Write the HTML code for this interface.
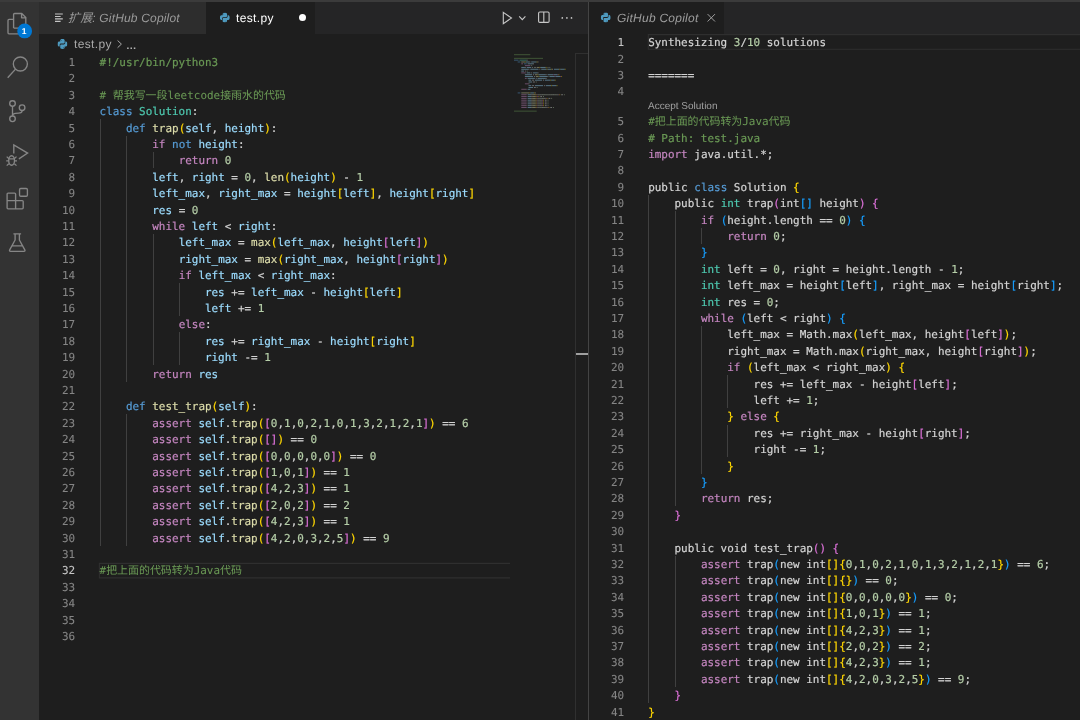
<!DOCTYPE html>
<html lang="zh-CN">
<head>
<meta charset="utf-8">
<title>test.py — GitHub Copilot</title>
<style>
*{box-sizing:border-box}
html,body{margin:0;padding:0}
body{width:1080px;height:720px;overflow:hidden;background:#1e1e1e;position:relative;
 font-family:"Liberation Sans","Noto Sans CJK SC",sans-serif;color:#d4d4d4;text-rendering:geometricPrecision;-webkit-font-smoothing:antialiased}
.abs{position:absolute}
#top{position:absolute;left:0;top:0;width:1080px;height:2px;background:#3b3b3b}
#act{position:absolute;left:0;top:2px;width:39px;height:718px;background:#333333}
#tabsL{position:absolute;left:39px;top:2px;width:549.5px;height:31.8px;background:#252526}
#tabsR{position:absolute;left:589.5px;top:2px;width:490.5px;height:31.8px;background:#252526}
.tab{position:absolute;top:0;height:31.8px}
#sep{position:absolute;left:588.4px;top:2px;width:1.1px;height:718px;background:#444444}
.ui{font-size:12px;white-space:pre;position:absolute;line-height:16px;will-change:transform}
.l,.n{position:absolute;height:16.4px;line-height:16.4px;white-space:pre;
 font-family:"DejaVu Sans Mono","Liberation Mono","Noto Sans CJK SC",monospace;font-size:10.94px}
.l{-webkit-text-stroke:.2px}
.l.k{-webkit-text-stroke:.04px}
.n{-webkit-text-stroke:.08px}
.n{width:40px;text-align:right;color:#858585}
.n.a{color:#c6c6c6}
.ly{position:absolute;left:0;top:0;width:1080px;height:720px;will-change:transform}
.g{position:absolute;width:1px;background:#404040}
.hl{position:absolute;height:16.4px;border:1px solid #2b2b2b;border-right:0}
</style>
</head>
<body>
<div id="top"></div>
<div id="act"></div>
<div id="tabsL">
  <div class="tab" style="left:0;width:167px;background:#2d2d2d"></div>
  <div class="tab" style="left:167px;width:109px;background:#1e1e1e"></div>
</div>
<div id="tabsR">
  <div class="tab" style="left:0;width:134.5px;background:#1e1e1e"></div>
</div>
<div id="sep"></div>


<!-- activity bar + toolbar icons -->
<svg class="abs" style="left:0;top:0" width="1080" height="720" viewBox="0 0 1080 720" fill="none">
<defs>
<symbol id="py" viewBox="0 0 10 10">
<path id="pyh" fill="#4e9abf" d="M5 0C3.2 0 2.75.7 2.75 1.7V2.6H1.5C.5 2.6 0 3.5 0 5C0 6.5.5 7.4 1.5 7.4H2.2V6C2.2 5.1 2.9 4.6 3.7 4.6H6.1C6.8 4.6 7.25 4.1 7.25 3.4V1.7C7.25.7 6.8 0 5 0Z"/>
<use href="#pyh" transform="rotate(180 5 5)"/>
<circle cx="3.9" cy="1.4" r=".45" fill="#1e1e1e" opacity=".55"/><circle cx="6.1" cy="8.6" r=".45" fill="#1e1e1e" opacity=".55"/>
</symbol>
</defs>
<g stroke="#868686" stroke-width="1.35" stroke-linejoin="round" stroke-linecap="butt">
<!-- files -->
<path d="M13.6 28.1V14.5q0-1 1-1H21.8L25.8 17.5V27.1q0 1-1 1H13.6M21.6 13.6V17.8H25.7"/>
<path d="M13.5 19.4H9q-1 0-1 1V32.8q0 1 1 1H18q1 0 1-1V28.4"/>
<!-- search -->
<circle cx="20.35" cy="64" r="7.02"/>
<path d="M15.5 69.1L7.7 77.8"/>
<!-- source control -->
<circle cx="12.5" cy="103.5" r="2.8"/><circle cx="22.1" cy="107.7" r="2.8"/><circle cx="12.5" cy="118.8" r="2.8"/>
<path d="M12.5 106.3V116M22.1 110.5C22.1 112.8 20.5 113.1 18.5 113.2L15.5 113.3C13.5 113.4 12.7 114.4 12.5 116"/>
<!-- debug -->
<path d="M13.8 153.6V144.9L27.6 153.1L18.9 158.9" stroke-linejoin="miter"/>
<ellipse cx="11.6" cy="160.5" rx="2.9" ry="4.75"/>
<path d="M8.7 158.9H14.5M8.7 158.5L6.7 156.6M8.6 160.9H6.2M8.8 163.7L6.7 165.6M14.5 158.5L16.5 156.6M14.6 160.9H17M14.4 163.7L16.5 165.6" stroke-width="1.25"/>
<!-- extensions -->
<rect x="19.55" y="188.45" width="7.85" height="7.8" rx="1.2"/>
<path d="M8.1 193.1H14.6q1 0 1 1V200.6H22.2q1 0 1 1V207.8q0 1-1 1H8.1q-1 0-1-1V194.1q0-1 1-1ZM15.6 200.6V208.8M7.1 200.6H15.6"/>
<!-- beaker -->
<path d="M13.4 233.9H21.1M15.1 234V240L9.7 249.8Q9 251.3 10.6 251.3H23.9Q25.5 251.3 24.8 249.8L19.4 240V234M12.4 245.9H22.1"/>
</g>
<!-- badge -->
<circle cx="24.65" cy="30.95" r="7.4" fill="#0078d4"/>
<!-- preview tab icon -->
<path d="M55 14H62.8M55 16.45H60.6M55 18.9H62.8M55 21.35H60.6" stroke="#c5c5c5" stroke-width="1.1"/>
<!-- python icons -->
<use href="#py" x="219.9" y="12.6" width="9.9" height="10"/>
<use href="#py" x="57.5" y="39" width="9.9" height="10"/>
<use href="#py" x="600.8" y="12.5" width="9.9" height="10"/>
<!-- breadcrumb chevron -->
<path d="M117.6 40.5L121.4 44.1L117.6 47.7" stroke="#a9a9a9" stroke-width="1"/>
<!-- editor actions -->
<g stroke="#c8c8c8" stroke-width="1.1">
<path d="M503.3 12.4L511.5 18L503.3 23.6Z" stroke-linejoin="miter"/>
<path d="M519.2 16.3L522.3 19.6L525.4 16.3"/>
<rect x="538.6" y="12" width="10.5" height="10.4" rx="1.2"/>
<path d="M543.8 12V22.4"/>
</g>
<g fill="#c8c8c8"><circle cx="562.3" cy="17.9" r=".85"/><circle cx="566.9" cy="17.9" r=".85"/><circle cx="571.5" cy="17.9" r=".85"/></g>
<!-- right tab close -->
<path d="M707.6 14.1L715 21.5M715 14.1L707.6 21.5" stroke="#a0a0a0" stroke-width="1"/>
</svg>
<!-- overview ruler -->
<div class="abs" style="left:575.2px;top:53.4px;width:13.2px;height:667px;border-left:1px solid #303030;border-top:1px solid #303030"></div>
<div class="abs" style="left:576px;top:353.4px;width:12.4px;height:2px;background:#a0a0a0"></div>

<div class="ui" style="left:19.3px;top:22.9px;width:10px;text-align:center;font-size:8.5px;font-weight:700;color:#fff">1</div>
<!-- left tab labels -->
<div class="ui" style="left:68px;top:10px;color:#9a9a9a;font-style:italic;letter-spacing:.17px">扩展: GitHub Copilot</div>
<div class="ui" style="left:236px;top:10px;color:#ffffff;letter-spacing:.36px">test.py</div>
<div class="abs" style="left:298.5px;top:13.8px;width:7px;height:7px;border-radius:50%;background:#fff"></div>
<!-- breadcrumb -->
<div class="ui" style="left:74px;top:36px;color:#a9a9a9;letter-spacing:.36px">test.py</div>
<div class="ui" style="left:125.8px;top:37.7px;color:#b4b4b4;font-size:10.5px;font-weight:700;letter-spacing:-.2px">…</div>
<!-- right tab label -->
<div class="ui" style="left:616.7px;top:10px;color:#9d9d9d;font-style:italic;letter-spacing:.25px">GitHub Copilot</div>

<!-- current line highlights -->
<svg class="abs" style="left:0;top:0" width="1080" height="720" viewBox="0 0 1080 720" fill="none" stroke="#2f2f2f" stroke-width="1.15">
<path d="M510 563.3H99.4V577.8H510"/>
<path d="M1080 34.6H648.3V49.2H1080"/>
</svg>

<!-- codelens -->
<div class="ui" style="left:648px;top:99px;font-size:10px;color:#a0a0a0">Accept Solution</div>

<div id="left" class="ly"><div class="g" style="left:100px;top:119.2px;height:426.4px"></div>
<div class="g" style="left:126.34px;top:135.6px;height:246px"></div>
<div class="g" style="left:126.34px;top:414.4px;height:131.2px"></div>
<div class="g" style="left:152.69px;top:152px;height:16.4px"></div>
<div class="g" style="left:152.69px;top:234px;height:131.2px"></div>
<div class="g" style="left:179.03px;top:283.2px;height:32.8px"></div>
<div class="g" style="left:179.03px;top:332.4px;height:32.8px"></div>
<div class="n" style="left:35.2px;top:54.9px">1</div>
<div class="l" style="left:99.6px;top:54.9px"><span style="color:#6A9955">#!/usr/bin/python3</span></div>
<div class="n" style="left:35.2px;top:71.3px">2</div>
<div class="n" style="left:35.2px;top:87.7px">3</div>
<div class="l k" style="left:99.6px;top:87.7px"><span style="color:#6A9955"># 帮我写一段leetcode接雨水的代码</span></div>
<div class="n" style="left:35.2px;top:104.1px">4</div>
<div class="l" style="left:99.6px;top:104.1px"><span style="color:#569CD6">class </span><span style="color:#4EC9B0">Solution</span><span style="color:#D4D4D4">:</span></div>
<div class="n" style="left:35.2px;top:120.5px">5</div>
<div class="l" style="left:99.6px;top:120.5px"><span style="color:#D4D4D4">    </span><span style="color:#569CD6">def </span><span style="color:#DCDCAA">trap</span><span style="color:#FFD700">(</span><span style="color:#9CDCFE">self</span><span style="color:#D4D4D4">, </span><span style="color:#9CDCFE">height</span><span style="color:#FFD700">)</span><span style="color:#D4D4D4">:</span></div>
<div class="n" style="left:35.2px;top:136.9px">6</div>
<div class="l" style="left:99.6px;top:136.9px"><span style="color:#D4D4D4">        </span><span style="color:#C586C0">if </span><span style="color:#569CD6">not </span><span style="color:#9CDCFE">height</span><span style="color:#D4D4D4">:</span></div>
<div class="n" style="left:35.2px;top:153.3px">7</div>
<div class="l" style="left:99.6px;top:153.3px"><span style="color:#D4D4D4">            </span><span style="color:#C586C0">return </span><span style="color:#B5CEA8">0</span></div>
<div class="n" style="left:35.2px;top:169.7px">8</div>
<div class="l" style="left:99.6px;top:169.7px"><span style="color:#D4D4D4">        </span><span style="color:#9CDCFE">left</span><span style="color:#D4D4D4">, </span><span style="color:#9CDCFE">right </span><span style="color:#D4D4D4">= </span><span style="color:#B5CEA8">0</span><span style="color:#D4D4D4">, </span><span style="color:#DCDCAA">len</span><span style="color:#FFD700">(</span><span style="color:#9CDCFE">height</span><span style="color:#FFD700">) </span><span style="color:#D4D4D4">- </span><span style="color:#B5CEA8">1</span></div>
<div class="n" style="left:35.2px;top:186.1px">9</div>
<div class="l" style="left:99.6px;top:186.1px"><span style="color:#D4D4D4">        </span><span style="color:#9CDCFE">left_max</span><span style="color:#D4D4D4">, </span><span style="color:#9CDCFE">right_max </span><span style="color:#D4D4D4">= </span><span style="color:#9CDCFE">height</span><span style="color:#FFD700">[</span><span style="color:#9CDCFE">left</span><span style="color:#FFD700">]</span><span style="color:#D4D4D4">, </span><span style="color:#9CDCFE">height</span><span style="color:#FFD700">[</span><span style="color:#9CDCFE">right</span><span style="color:#FFD700">]</span></div>
<div class="n" style="left:35.2px;top:202.5px">10</div>
<div class="l" style="left:99.6px;top:202.5px"><span style="color:#D4D4D4">        </span><span style="color:#9CDCFE">res </span><span style="color:#D4D4D4">= </span><span style="color:#B5CEA8">0</span></div>
<div class="n" style="left:35.2px;top:218.9px">11</div>
<div class="l" style="left:99.6px;top:218.9px"><span style="color:#D4D4D4">        </span><span style="color:#C586C0">while </span><span style="color:#9CDCFE">left </span><span style="color:#D4D4D4">&lt; </span><span style="color:#9CDCFE">right</span><span style="color:#D4D4D4">:</span></div>
<div class="n" style="left:35.2px;top:235.3px">12</div>
<div class="l" style="left:99.6px;top:235.3px"><span style="color:#D4D4D4">            </span><span style="color:#9CDCFE">left_max </span><span style="color:#D4D4D4">= </span><span style="color:#DCDCAA">max</span><span style="color:#FFD700">(</span><span style="color:#9CDCFE">left_max</span><span style="color:#D4D4D4">, </span><span style="color:#9CDCFE">height</span><span style="color:#DA70D6">[</span><span style="color:#9CDCFE">left</span><span style="color:#DA70D6">]</span><span style="color:#FFD700">)</span></div>
<div class="n" style="left:35.2px;top:251.7px">13</div>
<div class="l" style="left:99.6px;top:251.7px"><span style="color:#D4D4D4">            </span><span style="color:#9CDCFE">right_max </span><span style="color:#D4D4D4">= </span><span style="color:#DCDCAA">max</span><span style="color:#FFD700">(</span><span style="color:#9CDCFE">right_max</span><span style="color:#D4D4D4">, </span><span style="color:#9CDCFE">height</span><span style="color:#DA70D6">[</span><span style="color:#9CDCFE">right</span><span style="color:#DA70D6">]</span><span style="color:#FFD700">)</span></div>
<div class="n" style="left:35.2px;top:268.1px">14</div>
<div class="l" style="left:99.6px;top:268.1px"><span style="color:#D4D4D4">            </span><span style="color:#C586C0">if </span><span style="color:#9CDCFE">left_max </span><span style="color:#D4D4D4">&lt; </span><span style="color:#9CDCFE">right_max</span><span style="color:#D4D4D4">:</span></div>
<div class="n" style="left:35.2px;top:284.5px">15</div>
<div class="l" style="left:99.6px;top:284.5px"><span style="color:#D4D4D4">                </span><span style="color:#9CDCFE">res </span><span style="color:#D4D4D4">+= </span><span style="color:#9CDCFE">left_max </span><span style="color:#D4D4D4">- </span><span style="color:#9CDCFE">height</span><span style="color:#FFD700">[</span><span style="color:#9CDCFE">left</span><span style="color:#FFD700">]</span></div>
<div class="n" style="left:35.2px;top:300.9px">16</div>
<div class="l" style="left:99.6px;top:300.9px"><span style="color:#D4D4D4">                </span><span style="color:#9CDCFE">left </span><span style="color:#D4D4D4">+= </span><span style="color:#B5CEA8">1</span></div>
<div class="n" style="left:35.2px;top:317.3px">17</div>
<div class="l" style="left:99.6px;top:317.3px"><span style="color:#D4D4D4">            </span><span style="color:#C586C0">else</span><span style="color:#D4D4D4">:</span></div>
<div class="n" style="left:35.2px;top:333.7px">18</div>
<div class="l" style="left:99.6px;top:333.7px"><span style="color:#D4D4D4">                </span><span style="color:#9CDCFE">res </span><span style="color:#D4D4D4">+= </span><span style="color:#9CDCFE">right_max </span><span style="color:#D4D4D4">- </span><span style="color:#9CDCFE">height</span><span style="color:#FFD700">[</span><span style="color:#9CDCFE">right</span><span style="color:#FFD700">]</span></div>
<div class="n" style="left:35.2px;top:350.1px">19</div>
<div class="l" style="left:99.6px;top:350.1px"><span style="color:#D4D4D4">                </span><span style="color:#9CDCFE">right </span><span style="color:#D4D4D4">-= </span><span style="color:#B5CEA8">1</span></div>
<div class="n" style="left:35.2px;top:366.5px">20</div>
<div class="l" style="left:99.6px;top:366.5px"><span style="color:#D4D4D4">        </span><span style="color:#C586C0">return </span><span style="color:#9CDCFE">res</span></div>
<div class="n" style="left:35.2px;top:382.9px">21</div>
<div class="n" style="left:35.2px;top:399.3px">22</div>
<div class="l" style="left:99.6px;top:399.3px"><span style="color:#D4D4D4">    </span><span style="color:#569CD6">def </span><span style="color:#DCDCAA">test_trap</span><span style="color:#FFD700">(</span><span style="color:#9CDCFE">self</span><span style="color:#FFD700">)</span><span style="color:#D4D4D4">:</span></div>
<div class="n" style="left:35.2px;top:415.7px">23</div>
<div class="l" style="left:99.6px;top:415.7px"><span style="color:#D4D4D4">        </span><span style="color:#C586C0">assert </span><span style="color:#9CDCFE">self</span><span style="color:#D4D4D4">.</span><span style="color:#DCDCAA">trap</span><span style="color:#FFD700">(</span><span style="color:#DA70D6">[</span><span style="color:#B5CEA8">0</span><span style="color:#D4D4D4">,</span><span style="color:#B5CEA8">1</span><span style="color:#D4D4D4">,</span><span style="color:#B5CEA8">0</span><span style="color:#D4D4D4">,</span><span style="color:#B5CEA8">2</span><span style="color:#D4D4D4">,</span><span style="color:#B5CEA8">1</span><span style="color:#D4D4D4">,</span><span style="color:#B5CEA8">0</span><span style="color:#D4D4D4">,</span><span style="color:#B5CEA8">1</span><span style="color:#D4D4D4">,</span><span style="color:#B5CEA8">3</span><span style="color:#D4D4D4">,</span><span style="color:#B5CEA8">2</span><span style="color:#D4D4D4">,</span><span style="color:#B5CEA8">1</span><span style="color:#D4D4D4">,</span><span style="color:#B5CEA8">2</span><span style="color:#D4D4D4">,</span><span style="color:#B5CEA8">1</span><span style="color:#DA70D6">]</span><span style="color:#FFD700">) </span><span style="color:#D4D4D4">== </span><span style="color:#B5CEA8">6</span></div>
<div class="n" style="left:35.2px;top:432.1px">24</div>
<div class="l" style="left:99.6px;top:432.1px"><span style="color:#D4D4D4">        </span><span style="color:#C586C0">assert </span><span style="color:#9CDCFE">self</span><span style="color:#D4D4D4">.</span><span style="color:#DCDCAA">trap</span><span style="color:#FFD700">(</span><span style="color:#DA70D6">[]</span><span style="color:#FFD700">) </span><span style="color:#D4D4D4">== </span><span style="color:#B5CEA8">0</span></div>
<div class="n" style="left:35.2px;top:448.5px">25</div>
<div class="l" style="left:99.6px;top:448.5px"><span style="color:#D4D4D4">        </span><span style="color:#C586C0">assert </span><span style="color:#9CDCFE">self</span><span style="color:#D4D4D4">.</span><span style="color:#DCDCAA">trap</span><span style="color:#FFD700">(</span><span style="color:#DA70D6">[</span><span style="color:#B5CEA8">0</span><span style="color:#D4D4D4">,</span><span style="color:#B5CEA8">0</span><span style="color:#D4D4D4">,</span><span style="color:#B5CEA8">0</span><span style="color:#D4D4D4">,</span><span style="color:#B5CEA8">0</span><span style="color:#D4D4D4">,</span><span style="color:#B5CEA8">0</span><span style="color:#DA70D6">]</span><span style="color:#FFD700">) </span><span style="color:#D4D4D4">== </span><span style="color:#B5CEA8">0</span></div>
<div class="n" style="left:35.2px;top:464.9px">26</div>
<div class="l" style="left:99.6px;top:464.9px"><span style="color:#D4D4D4">        </span><span style="color:#C586C0">assert </span><span style="color:#9CDCFE">self</span><span style="color:#D4D4D4">.</span><span style="color:#DCDCAA">trap</span><span style="color:#FFD700">(</span><span style="color:#DA70D6">[</span><span style="color:#B5CEA8">1</span><span style="color:#D4D4D4">,</span><span style="color:#B5CEA8">0</span><span style="color:#D4D4D4">,</span><span style="color:#B5CEA8">1</span><span style="color:#DA70D6">]</span><span style="color:#FFD700">) </span><span style="color:#D4D4D4">== </span><span style="color:#B5CEA8">1</span></div>
<div class="n" style="left:35.2px;top:481.3px">27</div>
<div class="l" style="left:99.6px;top:481.3px"><span style="color:#D4D4D4">        </span><span style="color:#C586C0">assert </span><span style="color:#9CDCFE">self</span><span style="color:#D4D4D4">.</span><span style="color:#DCDCAA">trap</span><span style="color:#FFD700">(</span><span style="color:#DA70D6">[</span><span style="color:#B5CEA8">4</span><span style="color:#D4D4D4">,</span><span style="color:#B5CEA8">2</span><span style="color:#D4D4D4">,</span><span style="color:#B5CEA8">3</span><span style="color:#DA70D6">]</span><span style="color:#FFD700">) </span><span style="color:#D4D4D4">== </span><span style="color:#B5CEA8">1</span></div>
<div class="n" style="left:35.2px;top:497.7px">28</div>
<div class="l" style="left:99.6px;top:497.7px"><span style="color:#D4D4D4">        </span><span style="color:#C586C0">assert </span><span style="color:#9CDCFE">self</span><span style="color:#D4D4D4">.</span><span style="color:#DCDCAA">trap</span><span style="color:#FFD700">(</span><span style="color:#DA70D6">[</span><span style="color:#B5CEA8">2</span><span style="color:#D4D4D4">,</span><span style="color:#B5CEA8">0</span><span style="color:#D4D4D4">,</span><span style="color:#B5CEA8">2</span><span style="color:#DA70D6">]</span><span style="color:#FFD700">) </span><span style="color:#D4D4D4">== </span><span style="color:#B5CEA8">2</span></div>
<div class="n" style="left:35.2px;top:514.1px">29</div>
<div class="l" style="left:99.6px;top:514.1px"><span style="color:#D4D4D4">        </span><span style="color:#C586C0">assert </span><span style="color:#9CDCFE">self</span><span style="color:#D4D4D4">.</span><span style="color:#DCDCAA">trap</span><span style="color:#FFD700">(</span><span style="color:#DA70D6">[</span><span style="color:#B5CEA8">4</span><span style="color:#D4D4D4">,</span><span style="color:#B5CEA8">2</span><span style="color:#D4D4D4">,</span><span style="color:#B5CEA8">3</span><span style="color:#DA70D6">]</span><span style="color:#FFD700">) </span><span style="color:#D4D4D4">== </span><span style="color:#B5CEA8">1</span></div>
<div class="n" style="left:35.2px;top:530.5px">30</div>
<div class="l" style="left:99.6px;top:530.5px"><span style="color:#D4D4D4">        </span><span style="color:#C586C0">assert </span><span style="color:#9CDCFE">self</span><span style="color:#D4D4D4">.</span><span style="color:#DCDCAA">trap</span><span style="color:#FFD700">(</span><span style="color:#DA70D6">[</span><span style="color:#B5CEA8">4</span><span style="color:#D4D4D4">,</span><span style="color:#B5CEA8">2</span><span style="color:#D4D4D4">,</span><span style="color:#B5CEA8">0</span><span style="color:#D4D4D4">,</span><span style="color:#B5CEA8">3</span><span style="color:#D4D4D4">,</span><span style="color:#B5CEA8">2</span><span style="color:#D4D4D4">,</span><span style="color:#B5CEA8">5</span><span style="color:#DA70D6">]</span><span style="color:#FFD700">) </span><span style="color:#D4D4D4">== </span><span style="color:#B5CEA8">9</span></div>
<div class="n" style="left:35.2px;top:546.9px">31</div>
<div class="n a" style="left:35.2px;top:563.3px">32</div>
<div class="l k" style="left:99.6px;top:563.3px"><span style="color:#6A9955">#把上面的代码转为Java代码</span></div>
<div class="n" style="left:35.2px;top:579.7px">33</div>
<div class="n" style="left:35.2px;top:596.1px">34</div>
<div class="n" style="left:35.2px;top:612.5px">35</div>
<div class="n" style="left:35.2px;top:628.9px">36</div></div>
<div id="right" class="ly"><div class="g" style="left:648.3px;top:194.9px;height:508.4px"></div>
<div class="g" style="left:674.64px;top:211.3px;height:295.2px"></div>
<div class="g" style="left:674.64px;top:555.7px;height:131.2px"></div>
<div class="g" style="left:700.99px;top:227.7px;height:16.4px"></div>
<div class="g" style="left:700.99px;top:326.1px;height:147.6px"></div>
<div class="g" style="left:727.33px;top:375.3px;height:32.8px"></div>
<div class="g" style="left:727.33px;top:424.5px;height:32.8px"></div>
<div class="n a" style="left:584.2px;top:35.1px">1</div>
<div class="l" style="left:648.2px;top:35.1px"><span style="color:#D4D4D4">Synthesizing </span><span style="color:#B5CEA8">3</span><span style="color:#D4D4D4">/</span><span style="color:#B5CEA8">10 </span><span style="color:#D4D4D4">solutions</span></div>
<div class="n" style="left:584.2px;top:51.5px">2</div>
<div class="n" style="left:584.2px;top:67.9px">3</div>
<div class="l" style="left:648.2px;top:67.9px"><span style="color:#D4D4D4">=======</span></div>
<div class="n" style="left:584.2px;top:84.3px">4</div>
<div class="n" style="left:584.2px;top:114.2px">5</div>
<div class="l k" style="left:648.2px;top:114.2px"><span style="color:#6A9955">#把上面的代码转为Java代码</span></div>
<div class="n" style="left:584.2px;top:130.6px">6</div>
<div class="l" style="left:648.2px;top:130.6px"><span style="color:#6A9955"># Path: test.java</span></div>
<div class="n" style="left:584.2px;top:147px">7</div>
<div class="l" style="left:648.2px;top:147px"><span style="color:#C586C0">import </span><span style="color:#D4D4D4">java.util.*;</span></div>
<div class="n" style="left:584.2px;top:163.4px">8</div>
<div class="n" style="left:584.2px;top:179.8px">9</div>
<div class="l" style="left:648.2px;top:179.8px"><span style="color:#D4D4D4">public </span><span style="color:#569CD6">class </span><span style="color:#D4D4D4">Solution </span><span style="color:#FFD700">{</span></div>
<div class="n" style="left:584.2px;top:196.2px">10</div>
<div class="l" style="left:648.2px;top:196.2px"><span style="color:#D4D4D4">    public </span><span style="color:#4EC9B0">int </span><span style="color:#D4D4D4">trap</span><span style="color:#DA70D6">(</span><span style="color:#D4D4D4">int</span><span style="color:#179FFF">[] </span><span style="color:#D4D4D4">height</span><span style="color:#DA70D6">) {</span></div>
<div class="n" style="left:584.2px;top:212.6px">11</div>
<div class="l" style="left:648.2px;top:212.6px"><span style="color:#D4D4D4">        </span><span style="color:#C586C0">if </span><span style="color:#179FFF">(</span><span style="color:#D4D4D4">height.length == </span><span style="color:#B5CEA8">0</span><span style="color:#179FFF">) {</span></div>
<div class="n" style="left:584.2px;top:229px">12</div>
<div class="l" style="left:648.2px;top:229px"><span style="color:#D4D4D4">            </span><span style="color:#C586C0">return </span><span style="color:#B5CEA8">0</span><span style="color:#D4D4D4">;</span></div>
<div class="n" style="left:584.2px;top:245.4px">13</div>
<div class="l" style="left:648.2px;top:245.4px"><span style="color:#D4D4D4">        </span><span style="color:#179FFF">}</span></div>
<div class="n" style="left:584.2px;top:261.8px">14</div>
<div class="l" style="left:648.2px;top:261.8px"><span style="color:#D4D4D4">        </span><span style="color:#4EC9B0">int </span><span style="color:#D4D4D4">left = </span><span style="color:#B5CEA8">0</span><span style="color:#D4D4D4">, right = height.length - </span><span style="color:#B5CEA8">1</span><span style="color:#D4D4D4">;</span></div>
<div class="n" style="left:584.2px;top:278.2px">15</div>
<div class="l" style="left:648.2px;top:278.2px"><span style="color:#D4D4D4">        </span><span style="color:#4EC9B0">int </span><span style="color:#D4D4D4">left_max = height</span><span style="color:#179FFF">[</span><span style="color:#D4D4D4">left</span><span style="color:#179FFF">]</span><span style="color:#D4D4D4">, right_max = height</span><span style="color:#179FFF">[</span><span style="color:#D4D4D4">right</span><span style="color:#179FFF">]</span><span style="color:#D4D4D4">;</span></div>
<div class="n" style="left:584.2px;top:294.6px">16</div>
<div class="l" style="left:648.2px;top:294.6px"><span style="color:#D4D4D4">        </span><span style="color:#4EC9B0">int </span><span style="color:#D4D4D4">res = </span><span style="color:#B5CEA8">0</span><span style="color:#D4D4D4">;</span></div>
<div class="n" style="left:584.2px;top:311px">17</div>
<div class="l" style="left:648.2px;top:311px"><span style="color:#D4D4D4">        </span><span style="color:#C586C0">while </span><span style="color:#179FFF">(</span><span style="color:#D4D4D4">left &lt; right</span><span style="color:#179FFF">) {</span></div>
<div class="n" style="left:584.2px;top:327.4px">18</div>
<div class="l" style="left:648.2px;top:327.4px"><span style="color:#D4D4D4">            left_max = Math.max</span><span style="color:#FFD700">(</span><span style="color:#D4D4D4">left_max, height</span><span style="color:#DA70D6">[</span><span style="color:#D4D4D4">left</span><span style="color:#DA70D6">]</span><span style="color:#FFD700">)</span><span style="color:#D4D4D4">;</span></div>
<div class="n" style="left:584.2px;top:343.8px">19</div>
<div class="l" style="left:648.2px;top:343.8px"><span style="color:#D4D4D4">            right_max = Math.max</span><span style="color:#FFD700">(</span><span style="color:#D4D4D4">right_max, height</span><span style="color:#DA70D6">[</span><span style="color:#D4D4D4">right</span><span style="color:#DA70D6">]</span><span style="color:#FFD700">)</span><span style="color:#D4D4D4">;</span></div>
<div class="n" style="left:584.2px;top:360.2px">20</div>
<div class="l" style="left:648.2px;top:360.2px"><span style="color:#D4D4D4">            </span><span style="color:#C586C0">if </span><span style="color:#FFD700">(</span><span style="color:#D4D4D4">left_max &lt; right_max</span><span style="color:#FFD700">) {</span></div>
<div class="n" style="left:584.2px;top:376.6px">21</div>
<div class="l" style="left:648.2px;top:376.6px"><span style="color:#D4D4D4">                res += left_max - height</span><span style="color:#DA70D6">[</span><span style="color:#D4D4D4">left</span><span style="color:#DA70D6">]</span><span style="color:#D4D4D4">;</span></div>
<div class="n" style="left:584.2px;top:393px">22</div>
<div class="l" style="left:648.2px;top:393px"><span style="color:#D4D4D4">                left += </span><span style="color:#B5CEA8">1</span><span style="color:#D4D4D4">;</span></div>
<div class="n" style="left:584.2px;top:409.4px">23</div>
<div class="l" style="left:648.2px;top:409.4px"><span style="color:#D4D4D4">            </span><span style="color:#FFD700">} </span><span style="color:#C586C0">else </span><span style="color:#FFD700">{</span></div>
<div class="n" style="left:584.2px;top:425.8px">24</div>
<div class="l" style="left:648.2px;top:425.8px"><span style="color:#D4D4D4">                res += right_max - height</span><span style="color:#DA70D6">[</span><span style="color:#D4D4D4">right</span><span style="color:#DA70D6">]</span><span style="color:#D4D4D4">;</span></div>
<div class="n" style="left:584.2px;top:442.2px">25</div>
<div class="l" style="left:648.2px;top:442.2px"><span style="color:#D4D4D4">                right -= </span><span style="color:#B5CEA8">1</span><span style="color:#D4D4D4">;</span></div>
<div class="n" style="left:584.2px;top:458.6px">26</div>
<div class="l" style="left:648.2px;top:458.6px"><span style="color:#D4D4D4">            </span><span style="color:#FFD700">}</span></div>
<div class="n" style="left:584.2px;top:475px">27</div>
<div class="l" style="left:648.2px;top:475px"><span style="color:#D4D4D4">        </span><span style="color:#179FFF">}</span></div>
<div class="n" style="left:584.2px;top:491.4px">28</div>
<div class="l" style="left:648.2px;top:491.4px"><span style="color:#D4D4D4">        </span><span style="color:#C586C0">return </span><span style="color:#D4D4D4">res;</span></div>
<div class="n" style="left:584.2px;top:507.8px">29</div>
<div class="l" style="left:648.2px;top:507.8px"><span style="color:#D4D4D4">    </span><span style="color:#DA70D6">}</span></div>
<div class="n" style="left:584.2px;top:524.2px">30</div>
<div class="n" style="left:584.2px;top:540.6px">31</div>
<div class="l" style="left:648.2px;top:540.6px"><span style="color:#D4D4D4">    public void test_trap</span><span style="color:#DA70D6">() {</span></div>
<div class="n" style="left:584.2px;top:557px">32</div>
<div class="l" style="left:648.2px;top:557px"><span style="color:#D4D4D4">        </span><span style="color:#C586C0">assert </span><span style="color:#D4D4D4">trap</span><span style="color:#179FFF">(</span><span style="color:#D4D4D4">new int</span><span style="color:#FFD700">[]{</span><span style="color:#B5CEA8">0</span><span style="color:#D4D4D4">,</span><span style="color:#B5CEA8">1</span><span style="color:#D4D4D4">,</span><span style="color:#B5CEA8">0</span><span style="color:#D4D4D4">,</span><span style="color:#B5CEA8">2</span><span style="color:#D4D4D4">,</span><span style="color:#B5CEA8">1</span><span style="color:#D4D4D4">,</span><span style="color:#B5CEA8">0</span><span style="color:#D4D4D4">,</span><span style="color:#B5CEA8">1</span><span style="color:#D4D4D4">,</span><span style="color:#B5CEA8">3</span><span style="color:#D4D4D4">,</span><span style="color:#B5CEA8">2</span><span style="color:#D4D4D4">,</span><span style="color:#B5CEA8">1</span><span style="color:#D4D4D4">,</span><span style="color:#B5CEA8">2</span><span style="color:#D4D4D4">,</span><span style="color:#B5CEA8">1</span><span style="color:#FFD700">}</span><span style="color:#179FFF">) </span><span style="color:#D4D4D4">== </span><span style="color:#B5CEA8">6</span><span style="color:#D4D4D4">;</span></div>
<div class="n" style="left:584.2px;top:573.4px">33</div>
<div class="l" style="left:648.2px;top:573.4px"><span style="color:#D4D4D4">        </span><span style="color:#C586C0">assert </span><span style="color:#D4D4D4">trap</span><span style="color:#179FFF">(</span><span style="color:#D4D4D4">new int</span><span style="color:#FFD700">[]{}</span><span style="color:#179FFF">) </span><span style="color:#D4D4D4">== </span><span style="color:#B5CEA8">0</span><span style="color:#D4D4D4">;</span></div>
<div class="n" style="left:584.2px;top:589.8px">34</div>
<div class="l" style="left:648.2px;top:589.8px"><span style="color:#D4D4D4">        </span><span style="color:#C586C0">assert </span><span style="color:#D4D4D4">trap</span><span style="color:#179FFF">(</span><span style="color:#D4D4D4">new int</span><span style="color:#FFD700">[]{</span><span style="color:#B5CEA8">0</span><span style="color:#D4D4D4">,</span><span style="color:#B5CEA8">0</span><span style="color:#D4D4D4">,</span><span style="color:#B5CEA8">0</span><span style="color:#D4D4D4">,</span><span style="color:#B5CEA8">0</span><span style="color:#D4D4D4">,</span><span style="color:#B5CEA8">0</span><span style="color:#FFD700">}</span><span style="color:#179FFF">) </span><span style="color:#D4D4D4">== </span><span style="color:#B5CEA8">0</span><span style="color:#D4D4D4">;</span></div>
<div class="n" style="left:584.2px;top:606.2px">35</div>
<div class="l" style="left:648.2px;top:606.2px"><span style="color:#D4D4D4">        </span><span style="color:#C586C0">assert </span><span style="color:#D4D4D4">trap</span><span style="color:#179FFF">(</span><span style="color:#D4D4D4">new int</span><span style="color:#FFD700">[]{</span><span style="color:#B5CEA8">1</span><span style="color:#D4D4D4">,</span><span style="color:#B5CEA8">0</span><span style="color:#D4D4D4">,</span><span style="color:#B5CEA8">1</span><span style="color:#FFD700">}</span><span style="color:#179FFF">) </span><span style="color:#D4D4D4">== </span><span style="color:#B5CEA8">1</span><span style="color:#D4D4D4">;</span></div>
<div class="n" style="left:584.2px;top:622.6px">36</div>
<div class="l" style="left:648.2px;top:622.6px"><span style="color:#D4D4D4">        </span><span style="color:#C586C0">assert </span><span style="color:#D4D4D4">trap</span><span style="color:#179FFF">(</span><span style="color:#D4D4D4">new int</span><span style="color:#FFD700">[]{</span><span style="color:#B5CEA8">4</span><span style="color:#D4D4D4">,</span><span style="color:#B5CEA8">2</span><span style="color:#D4D4D4">,</span><span style="color:#B5CEA8">3</span><span style="color:#FFD700">}</span><span style="color:#179FFF">) </span><span style="color:#D4D4D4">== </span><span style="color:#B5CEA8">1</span><span style="color:#D4D4D4">;</span></div>
<div class="n" style="left:584.2px;top:639px">37</div>
<div class="l" style="left:648.2px;top:639px"><span style="color:#D4D4D4">        </span><span style="color:#C586C0">assert </span><span style="color:#D4D4D4">trap</span><span style="color:#179FFF">(</span><span style="color:#D4D4D4">new int</span><span style="color:#FFD700">[]{</span><span style="color:#B5CEA8">2</span><span style="color:#D4D4D4">,</span><span style="color:#B5CEA8">0</span><span style="color:#D4D4D4">,</span><span style="color:#B5CEA8">2</span><span style="color:#FFD700">}</span><span style="color:#179FFF">) </span><span style="color:#D4D4D4">== </span><span style="color:#B5CEA8">2</span><span style="color:#D4D4D4">;</span></div>
<div class="n" style="left:584.2px;top:655.4px">38</div>
<div class="l" style="left:648.2px;top:655.4px"><span style="color:#D4D4D4">        </span><span style="color:#C586C0">assert </span><span style="color:#D4D4D4">trap</span><span style="color:#179FFF">(</span><span style="color:#D4D4D4">new int</span><span style="color:#FFD700">[]{</span><span style="color:#B5CEA8">4</span><span style="color:#D4D4D4">,</span><span style="color:#B5CEA8">2</span><span style="color:#D4D4D4">,</span><span style="color:#B5CEA8">3</span><span style="color:#FFD700">}</span><span style="color:#179FFF">) </span><span style="color:#D4D4D4">== </span><span style="color:#B5CEA8">1</span><span style="color:#D4D4D4">;</span></div>
<div class="n" style="left:584.2px;top:671.8px">39</div>
<div class="l" style="left:648.2px;top:671.8px"><span style="color:#D4D4D4">        </span><span style="color:#C586C0">assert </span><span style="color:#D4D4D4">trap</span><span style="color:#179FFF">(</span><span style="color:#D4D4D4">new int</span><span style="color:#FFD700">[]{</span><span style="color:#B5CEA8">4</span><span style="color:#D4D4D4">,</span><span style="color:#B5CEA8">2</span><span style="color:#D4D4D4">,</span><span style="color:#B5CEA8">0</span><span style="color:#D4D4D4">,</span><span style="color:#B5CEA8">3</span><span style="color:#D4D4D4">,</span><span style="color:#B5CEA8">2</span><span style="color:#D4D4D4">,</span><span style="color:#B5CEA8">5</span><span style="color:#FFD700">}</span><span style="color:#179FFF">) </span><span style="color:#D4D4D4">== </span><span style="color:#B5CEA8">9</span><span style="color:#D4D4D4">;</span></div>
<div class="n" style="left:584.2px;top:688.2px">40</div>
<div class="l" style="left:648.2px;top:688.2px"><span style="color:#D4D4D4">    </span><span style="color:#DA70D6">}</span></div>
<div class="n" style="left:584.2px;top:704.6px">41</div>
<div class="l" style="left:648.2px;top:704.6px"><span style="color:#FFD700">}</span></div></div>
<svg id="mm" class="abs" style="left:0;top:0" width="1080" height="720" viewBox="0 0 1080 720" opacity=".45"><rect x="514" y="54.2" width="16.33" height="1" fill="#6A9955"/>
<rect x="514" y="57.84" width="29.02" height="1" fill="#6A9955"/>
<rect x="514" y="59.66" width="4.54" height="1" fill="#569CD6"/>
<rect x="519.44" y="59.66" width="7.26" height="1" fill="#4EC9B0"/>
<rect x="526.7" y="59.66" width="0.91" height="1" fill="#D4D4D4"/>
<rect x="517.63" y="61.48" width="2.72" height="1" fill="#569CD6"/>
<rect x="521.26" y="61.48" width="3.63" height="1" fill="#DCDCAA"/>
<rect x="524.88" y="61.48" width="0.91" height="1" fill="#FFD700"/>
<rect x="525.79" y="61.48" width="3.63" height="1" fill="#9CDCFE"/>
<rect x="529.42" y="61.48" width="0.91" height="1" fill="#D4D4D4"/>
<rect x="531.23" y="61.48" width="5.44" height="1" fill="#9CDCFE"/>
<rect x="536.67" y="61.48" width="0.91" height="1" fill="#FFD700"/>
<rect x="537.58" y="61.48" width="0.91" height="1" fill="#D4D4D4"/>
<rect x="521.26" y="63.3" width="1.81" height="1" fill="#C586C0"/>
<rect x="523.98" y="63.3" width="2.72" height="1" fill="#569CD6"/>
<rect x="527.61" y="63.3" width="5.44" height="1" fill="#9CDCFE"/>
<rect x="533.05" y="63.3" width="0.91" height="1" fill="#D4D4D4"/>
<rect x="524.88" y="65.12" width="5.44" height="1" fill="#C586C0"/>
<rect x="531.23" y="65.12" width="0.91" height="1" fill="#B5CEA8"/>
<rect x="521.26" y="66.94" width="3.63" height="1" fill="#9CDCFE"/>
<rect x="524.88" y="66.94" width="0.91" height="1" fill="#D4D4D4"/>
<rect x="526.7" y="66.94" width="4.54" height="1" fill="#9CDCFE"/>
<rect x="532.14" y="66.94" width="0.91" height="1" fill="#D4D4D4"/>
<rect x="533.95" y="66.94" width="0.91" height="1" fill="#B5CEA8"/>
<rect x="534.86" y="66.94" width="0.91" height="1" fill="#D4D4D4"/>
<rect x="536.67" y="66.94" width="2.72" height="1" fill="#DCDCAA"/>
<rect x="539.4" y="66.94" width="0.91" height="1" fill="#FFD700"/>
<rect x="540.3" y="66.94" width="5.44" height="1" fill="#9CDCFE"/>
<rect x="545.75" y="66.94" width="0.91" height="1" fill="#FFD700"/>
<rect x="547.56" y="66.94" width="0.91" height="1" fill="#D4D4D4"/>
<rect x="549.37" y="66.94" width="0.91" height="1" fill="#B5CEA8"/>
<rect x="521.26" y="68.76" width="7.26" height="1" fill="#9CDCFE"/>
<rect x="528.51" y="68.76" width="0.91" height="1" fill="#D4D4D4"/>
<rect x="530.33" y="68.76" width="8.16" height="1" fill="#9CDCFE"/>
<rect x="539.4" y="68.76" width="0.91" height="1" fill="#D4D4D4"/>
<rect x="541.21" y="68.76" width="5.44" height="1" fill="#9CDCFE"/>
<rect x="546.65" y="68.76" width="0.91" height="1" fill="#FFD700"/>
<rect x="547.56" y="68.76" width="3.63" height="1" fill="#9CDCFE"/>
<rect x="551.19" y="68.76" width="0.91" height="1" fill="#FFD700"/>
<rect x="552.09" y="68.76" width="0.91" height="1" fill="#D4D4D4"/>
<rect x="553.91" y="68.76" width="5.44" height="1" fill="#9CDCFE"/>
<rect x="559.35" y="68.76" width="0.91" height="1" fill="#FFD700"/>
<rect x="560.26" y="68.76" width="4.54" height="1" fill="#9CDCFE"/>
<rect x="564.79" y="68.76" width="0.91" height="1" fill="#FFD700"/>
<rect x="521.26" y="70.58" width="2.72" height="1" fill="#9CDCFE"/>
<rect x="524.88" y="70.58" width="0.91" height="1" fill="#D4D4D4"/>
<rect x="526.7" y="70.58" width="0.91" height="1" fill="#B5CEA8"/>
<rect x="521.26" y="72.4" width="4.54" height="1" fill="#C586C0"/>
<rect x="526.7" y="72.4" width="3.63" height="1" fill="#9CDCFE"/>
<rect x="531.23" y="72.4" width="0.91" height="1" fill="#D4D4D4"/>
<rect x="533.05" y="72.4" width="4.54" height="1" fill="#9CDCFE"/>
<rect x="537.58" y="72.4" width="0.91" height="1" fill="#D4D4D4"/>
<rect x="524.88" y="74.22" width="7.26" height="1" fill="#9CDCFE"/>
<rect x="533.05" y="74.22" width="0.91" height="1" fill="#D4D4D4"/>
<rect x="534.86" y="74.22" width="2.72" height="1" fill="#DCDCAA"/>
<rect x="537.58" y="74.22" width="0.91" height="1" fill="#FFD700"/>
<rect x="538.49" y="74.22" width="7.26" height="1" fill="#9CDCFE"/>
<rect x="545.75" y="74.22" width="0.91" height="1" fill="#D4D4D4"/>
<rect x="547.56" y="74.22" width="5.44" height="1" fill="#9CDCFE"/>
<rect x="553" y="74.22" width="0.91" height="1" fill="#DA70D6"/>
<rect x="553.91" y="74.22" width="3.63" height="1" fill="#9CDCFE"/>
<rect x="557.54" y="74.22" width="0.91" height="1" fill="#DA70D6"/>
<rect x="558.44" y="74.22" width="0.91" height="1" fill="#FFD700"/>
<rect x="524.88" y="76.04" width="8.16" height="1" fill="#9CDCFE"/>
<rect x="533.95" y="76.04" width="0.91" height="1" fill="#D4D4D4"/>
<rect x="535.77" y="76.04" width="2.72" height="1" fill="#DCDCAA"/>
<rect x="538.49" y="76.04" width="0.91" height="1" fill="#FFD700"/>
<rect x="539.4" y="76.04" width="8.16" height="1" fill="#9CDCFE"/>
<rect x="547.56" y="76.04" width="0.91" height="1" fill="#D4D4D4"/>
<rect x="549.37" y="76.04" width="5.44" height="1" fill="#9CDCFE"/>
<rect x="554.82" y="76.04" width="0.91" height="1" fill="#DA70D6"/>
<rect x="555.72" y="76.04" width="4.54" height="1" fill="#9CDCFE"/>
<rect x="560.26" y="76.04" width="0.91" height="1" fill="#DA70D6"/>
<rect x="561.16" y="76.04" width="0.91" height="1" fill="#FFD700"/>
<rect x="524.88" y="77.86" width="1.81" height="1" fill="#C586C0"/>
<rect x="527.61" y="77.86" width="7.26" height="1" fill="#9CDCFE"/>
<rect x="535.77" y="77.86" width="0.91" height="1" fill="#D4D4D4"/>
<rect x="537.58" y="77.86" width="8.16" height="1" fill="#9CDCFE"/>
<rect x="545.75" y="77.86" width="0.91" height="1" fill="#D4D4D4"/>
<rect x="528.51" y="79.68" width="2.72" height="1" fill="#9CDCFE"/>
<rect x="532.14" y="79.68" width="1.81" height="1" fill="#D4D4D4"/>
<rect x="534.86" y="79.68" width="7.26" height="1" fill="#9CDCFE"/>
<rect x="543.02" y="79.68" width="0.91" height="1" fill="#D4D4D4"/>
<rect x="544.84" y="79.68" width="5.44" height="1" fill="#9CDCFE"/>
<rect x="550.28" y="79.68" width="0.91" height="1" fill="#FFD700"/>
<rect x="551.19" y="79.68" width="3.63" height="1" fill="#9CDCFE"/>
<rect x="554.82" y="79.68" width="0.91" height="1" fill="#FFD700"/>
<rect x="528.51" y="81.5" width="3.63" height="1" fill="#9CDCFE"/>
<rect x="533.05" y="81.5" width="1.81" height="1" fill="#D4D4D4"/>
<rect x="535.77" y="81.5" width="0.91" height="1" fill="#B5CEA8"/>
<rect x="524.88" y="83.32" width="3.63" height="1" fill="#C586C0"/>
<rect x="528.51" y="83.32" width="0.91" height="1" fill="#D4D4D4"/>
<rect x="528.51" y="85.14" width="2.72" height="1" fill="#9CDCFE"/>
<rect x="532.14" y="85.14" width="1.81" height="1" fill="#D4D4D4"/>
<rect x="534.86" y="85.14" width="8.16" height="1" fill="#9CDCFE"/>
<rect x="543.93" y="85.14" width="0.91" height="1" fill="#D4D4D4"/>
<rect x="545.75" y="85.14" width="5.44" height="1" fill="#9CDCFE"/>
<rect x="551.19" y="85.14" width="0.91" height="1" fill="#FFD700"/>
<rect x="552.09" y="85.14" width="4.54" height="1" fill="#9CDCFE"/>
<rect x="556.63" y="85.14" width="0.91" height="1" fill="#FFD700"/>
<rect x="528.51" y="86.96" width="4.54" height="1" fill="#9CDCFE"/>
<rect x="533.95" y="86.96" width="1.81" height="1" fill="#D4D4D4"/>
<rect x="536.67" y="86.96" width="0.91" height="1" fill="#B5CEA8"/>
<rect x="521.26" y="88.78" width="5.44" height="1" fill="#C586C0"/>
<rect x="527.61" y="88.78" width="2.72" height="1" fill="#9CDCFE"/>
<rect x="517.63" y="92.42" width="2.72" height="1" fill="#569CD6"/>
<rect x="521.26" y="92.42" width="8.16" height="1" fill="#DCDCAA"/>
<rect x="529.42" y="92.42" width="0.91" height="1" fill="#FFD700"/>
<rect x="530.33" y="92.42" width="3.63" height="1" fill="#9CDCFE"/>
<rect x="533.95" y="92.42" width="0.91" height="1" fill="#FFD700"/>
<rect x="534.86" y="92.42" width="0.91" height="1" fill="#D4D4D4"/>
<rect x="521.26" y="94.24" width="5.44" height="1" fill="#C586C0"/>
<rect x="527.61" y="94.24" width="3.63" height="1" fill="#9CDCFE"/>
<rect x="531.23" y="94.24" width="0.91" height="1" fill="#D4D4D4"/>
<rect x="532.14" y="94.24" width="3.63" height="1" fill="#DCDCAA"/>
<rect x="535.77" y="94.24" width="0.91" height="1" fill="#FFD700"/>
<rect x="536.67" y="94.24" width="0.91" height="1" fill="#DA70D6"/>
<rect x="537.58" y="94.24" width="0.91" height="1" fill="#B5CEA8"/>
<rect x="538.49" y="94.24" width="0.91" height="1" fill="#D4D4D4"/>
<rect x="539.4" y="94.24" width="0.91" height="1" fill="#B5CEA8"/>
<rect x="540.3" y="94.24" width="0.91" height="1" fill="#D4D4D4"/>
<rect x="541.21" y="94.24" width="0.91" height="1" fill="#B5CEA8"/>
<rect x="542.12" y="94.24" width="0.91" height="1" fill="#D4D4D4"/>
<rect x="543.02" y="94.24" width="0.91" height="1" fill="#B5CEA8"/>
<rect x="543.93" y="94.24" width="0.91" height="1" fill="#D4D4D4"/>
<rect x="544.84" y="94.24" width="0.91" height="1" fill="#B5CEA8"/>
<rect x="545.75" y="94.24" width="0.91" height="1" fill="#D4D4D4"/>
<rect x="546.65" y="94.24" width="0.91" height="1" fill="#B5CEA8"/>
<rect x="547.56" y="94.24" width="0.91" height="1" fill="#D4D4D4"/>
<rect x="548.47" y="94.24" width="0.91" height="1" fill="#B5CEA8"/>
<rect x="549.37" y="94.24" width="0.91" height="1" fill="#D4D4D4"/>
<rect x="550.28" y="94.24" width="0.91" height="1" fill="#B5CEA8"/>
<rect x="551.19" y="94.24" width="0.91" height="1" fill="#D4D4D4"/>
<rect x="552.09" y="94.24" width="0.91" height="1" fill="#B5CEA8"/>
<rect x="553" y="94.24" width="0.91" height="1" fill="#D4D4D4"/>
<rect x="553.91" y="94.24" width="0.91" height="1" fill="#B5CEA8"/>
<rect x="554.82" y="94.24" width="0.91" height="1" fill="#D4D4D4"/>
<rect x="555.72" y="94.24" width="0.91" height="1" fill="#B5CEA8"/>
<rect x="556.63" y="94.24" width="0.91" height="1" fill="#D4D4D4"/>
<rect x="557.54" y="94.24" width="0.91" height="1" fill="#B5CEA8"/>
<rect x="558.44" y="94.24" width="0.91" height="1" fill="#DA70D6"/>
<rect x="559.35" y="94.24" width="0.91" height="1" fill="#FFD700"/>
<rect x="561.16" y="94.24" width="1.81" height="1" fill="#D4D4D4"/>
<rect x="563.88" y="94.24" width="0.91" height="1" fill="#B5CEA8"/>
<rect x="521.26" y="96.06" width="5.44" height="1" fill="#C586C0"/>
<rect x="527.61" y="96.06" width="3.63" height="1" fill="#9CDCFE"/>
<rect x="531.23" y="96.06" width="0.91" height="1" fill="#D4D4D4"/>
<rect x="532.14" y="96.06" width="3.63" height="1" fill="#DCDCAA"/>
<rect x="535.77" y="96.06" width="0.91" height="1" fill="#FFD700"/>
<rect x="536.67" y="96.06" width="0.91" height="1" fill="#DA70D6"/>
<rect x="537.58" y="96.06" width="0.91" height="1" fill="#DA70D6"/>
<rect x="538.49" y="96.06" width="0.91" height="1" fill="#FFD700"/>
<rect x="540.3" y="96.06" width="1.81" height="1" fill="#D4D4D4"/>
<rect x="543.02" y="96.06" width="0.91" height="1" fill="#B5CEA8"/>
<rect x="521.26" y="97.88" width="5.44" height="1" fill="#C586C0"/>
<rect x="527.61" y="97.88" width="3.63" height="1" fill="#9CDCFE"/>
<rect x="531.23" y="97.88" width="0.91" height="1" fill="#D4D4D4"/>
<rect x="532.14" y="97.88" width="3.63" height="1" fill="#DCDCAA"/>
<rect x="535.77" y="97.88" width="0.91" height="1" fill="#FFD700"/>
<rect x="536.67" y="97.88" width="0.91" height="1" fill="#DA70D6"/>
<rect x="537.58" y="97.88" width="0.91" height="1" fill="#B5CEA8"/>
<rect x="538.49" y="97.88" width="0.91" height="1" fill="#D4D4D4"/>
<rect x="539.4" y="97.88" width="0.91" height="1" fill="#B5CEA8"/>
<rect x="540.3" y="97.88" width="0.91" height="1" fill="#D4D4D4"/>
<rect x="541.21" y="97.88" width="0.91" height="1" fill="#B5CEA8"/>
<rect x="542.12" y="97.88" width="0.91" height="1" fill="#D4D4D4"/>
<rect x="543.02" y="97.88" width="0.91" height="1" fill="#B5CEA8"/>
<rect x="543.93" y="97.88" width="0.91" height="1" fill="#D4D4D4"/>
<rect x="544.84" y="97.88" width="0.91" height="1" fill="#B5CEA8"/>
<rect x="545.75" y="97.88" width="0.91" height="1" fill="#DA70D6"/>
<rect x="546.65" y="97.88" width="0.91" height="1" fill="#FFD700"/>
<rect x="548.47" y="97.88" width="1.81" height="1" fill="#D4D4D4"/>
<rect x="551.19" y="97.88" width="0.91" height="1" fill="#B5CEA8"/>
<rect x="521.26" y="99.7" width="5.44" height="1" fill="#C586C0"/>
<rect x="527.61" y="99.7" width="3.63" height="1" fill="#9CDCFE"/>
<rect x="531.23" y="99.7" width="0.91" height="1" fill="#D4D4D4"/>
<rect x="532.14" y="99.7" width="3.63" height="1" fill="#DCDCAA"/>
<rect x="535.77" y="99.7" width="0.91" height="1" fill="#FFD700"/>
<rect x="536.67" y="99.7" width="0.91" height="1" fill="#DA70D6"/>
<rect x="537.58" y="99.7" width="0.91" height="1" fill="#B5CEA8"/>
<rect x="538.49" y="99.7" width="0.91" height="1" fill="#D4D4D4"/>
<rect x="539.4" y="99.7" width="0.91" height="1" fill="#B5CEA8"/>
<rect x="540.3" y="99.7" width="0.91" height="1" fill="#D4D4D4"/>
<rect x="541.21" y="99.7" width="0.91" height="1" fill="#B5CEA8"/>
<rect x="542.12" y="99.7" width="0.91" height="1" fill="#DA70D6"/>
<rect x="543.02" y="99.7" width="0.91" height="1" fill="#FFD700"/>
<rect x="544.84" y="99.7" width="1.81" height="1" fill="#D4D4D4"/>
<rect x="547.56" y="99.7" width="0.91" height="1" fill="#B5CEA8"/>
<rect x="521.26" y="101.52" width="5.44" height="1" fill="#C586C0"/>
<rect x="527.61" y="101.52" width="3.63" height="1" fill="#9CDCFE"/>
<rect x="531.23" y="101.52" width="0.91" height="1" fill="#D4D4D4"/>
<rect x="532.14" y="101.52" width="3.63" height="1" fill="#DCDCAA"/>
<rect x="535.77" y="101.52" width="0.91" height="1" fill="#FFD700"/>
<rect x="536.67" y="101.52" width="0.91" height="1" fill="#DA70D6"/>
<rect x="537.58" y="101.52" width="0.91" height="1" fill="#B5CEA8"/>
<rect x="538.49" y="101.52" width="0.91" height="1" fill="#D4D4D4"/>
<rect x="539.4" y="101.52" width="0.91" height="1" fill="#B5CEA8"/>
<rect x="540.3" y="101.52" width="0.91" height="1" fill="#D4D4D4"/>
<rect x="541.21" y="101.52" width="0.91" height="1" fill="#B5CEA8"/>
<rect x="542.12" y="101.52" width="0.91" height="1" fill="#DA70D6"/>
<rect x="543.02" y="101.52" width="0.91" height="1" fill="#FFD700"/>
<rect x="544.84" y="101.52" width="1.81" height="1" fill="#D4D4D4"/>
<rect x="547.56" y="101.52" width="0.91" height="1" fill="#B5CEA8"/>
<rect x="521.26" y="103.34" width="5.44" height="1" fill="#C586C0"/>
<rect x="527.61" y="103.34" width="3.63" height="1" fill="#9CDCFE"/>
<rect x="531.23" y="103.34" width="0.91" height="1" fill="#D4D4D4"/>
<rect x="532.14" y="103.34" width="3.63" height="1" fill="#DCDCAA"/>
<rect x="535.77" y="103.34" width="0.91" height="1" fill="#FFD700"/>
<rect x="536.67" y="103.34" width="0.91" height="1" fill="#DA70D6"/>
<rect x="537.58" y="103.34" width="0.91" height="1" fill="#B5CEA8"/>
<rect x="538.49" y="103.34" width="0.91" height="1" fill="#D4D4D4"/>
<rect x="539.4" y="103.34" width="0.91" height="1" fill="#B5CEA8"/>
<rect x="540.3" y="103.34" width="0.91" height="1" fill="#D4D4D4"/>
<rect x="541.21" y="103.34" width="0.91" height="1" fill="#B5CEA8"/>
<rect x="542.12" y="103.34" width="0.91" height="1" fill="#DA70D6"/>
<rect x="543.02" y="103.34" width="0.91" height="1" fill="#FFD700"/>
<rect x="544.84" y="103.34" width="1.81" height="1" fill="#D4D4D4"/>
<rect x="547.56" y="103.34" width="0.91" height="1" fill="#B5CEA8"/>
<rect x="521.26" y="105.16" width="5.44" height="1" fill="#C586C0"/>
<rect x="527.61" y="105.16" width="3.63" height="1" fill="#9CDCFE"/>
<rect x="531.23" y="105.16" width="0.91" height="1" fill="#D4D4D4"/>
<rect x="532.14" y="105.16" width="3.63" height="1" fill="#DCDCAA"/>
<rect x="535.77" y="105.16" width="0.91" height="1" fill="#FFD700"/>
<rect x="536.67" y="105.16" width="0.91" height="1" fill="#DA70D6"/>
<rect x="537.58" y="105.16" width="0.91" height="1" fill="#B5CEA8"/>
<rect x="538.49" y="105.16" width="0.91" height="1" fill="#D4D4D4"/>
<rect x="539.4" y="105.16" width="0.91" height="1" fill="#B5CEA8"/>
<rect x="540.3" y="105.16" width="0.91" height="1" fill="#D4D4D4"/>
<rect x="541.21" y="105.16" width="0.91" height="1" fill="#B5CEA8"/>
<rect x="542.12" y="105.16" width="0.91" height="1" fill="#DA70D6"/>
<rect x="543.02" y="105.16" width="0.91" height="1" fill="#FFD700"/>
<rect x="544.84" y="105.16" width="1.81" height="1" fill="#D4D4D4"/>
<rect x="547.56" y="105.16" width="0.91" height="1" fill="#B5CEA8"/>
<rect x="521.26" y="106.98" width="5.44" height="1" fill="#C586C0"/>
<rect x="527.61" y="106.98" width="3.63" height="1" fill="#9CDCFE"/>
<rect x="531.23" y="106.98" width="0.91" height="1" fill="#D4D4D4"/>
<rect x="532.14" y="106.98" width="3.63" height="1" fill="#DCDCAA"/>
<rect x="535.77" y="106.98" width="0.91" height="1" fill="#FFD700"/>
<rect x="536.67" y="106.98" width="0.91" height="1" fill="#DA70D6"/>
<rect x="537.58" y="106.98" width="0.91" height="1" fill="#B5CEA8"/>
<rect x="538.49" y="106.98" width="0.91" height="1" fill="#D4D4D4"/>
<rect x="539.4" y="106.98" width="0.91" height="1" fill="#B5CEA8"/>
<rect x="540.3" y="106.98" width="0.91" height="1" fill="#D4D4D4"/>
<rect x="541.21" y="106.98" width="0.91" height="1" fill="#B5CEA8"/>
<rect x="542.12" y="106.98" width="0.91" height="1" fill="#D4D4D4"/>
<rect x="543.02" y="106.98" width="0.91" height="1" fill="#B5CEA8"/>
<rect x="543.93" y="106.98" width="0.91" height="1" fill="#D4D4D4"/>
<rect x="544.84" y="106.98" width="0.91" height="1" fill="#B5CEA8"/>
<rect x="545.75" y="106.98" width="0.91" height="1" fill="#D4D4D4"/>
<rect x="546.65" y="106.98" width="0.91" height="1" fill="#B5CEA8"/>
<rect x="547.56" y="106.98" width="0.91" height="1" fill="#DA70D6"/>
<rect x="548.47" y="106.98" width="0.91" height="1" fill="#FFD700"/>
<rect x="550.28" y="106.98" width="1.81" height="1" fill="#D4D4D4"/>
<rect x="553" y="106.98" width="0.91" height="1" fill="#B5CEA8"/>
<rect x="514" y="110.62" width="22.68" height="1" fill="#6A9955"/></svg>
</body>
</html>
